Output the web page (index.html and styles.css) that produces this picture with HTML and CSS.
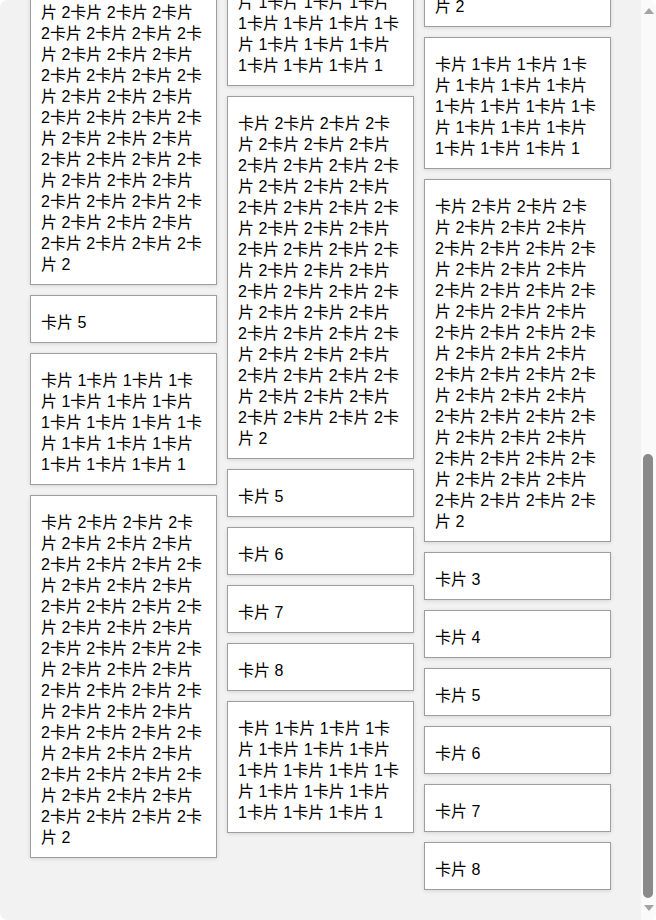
FILE: index.html
```html
<!DOCTYPE html>
<html lang="zh-CN">
<head>
    <meta charset="UTF-8">
    <title>瀑布流</title>
    <link rel="stylesheet" href="styles.css">
</head>
<body>

    <div class="app">
        <div id="waterfall">
            <div class="cols">
                <div class="col"></div>
                <div class="col"></div>
                <div class="col"></div>
            </div>
        </div>

        <div class="bar">
            <div class="arrow up"></div>
            <div class="track"><div class="thumb"></div></div>
            <div class="arrow down"></div>
        </div>
    </div>

    <script>
        var box = document.getElementById('waterfall');
        var col = box.getElementsByClassName('col');
        var track = document.getElementsByClassName('track')[0];
        var thumb = document.getElementsByClassName('thumb')[0];

        // 每一列放哪些卡片, 1 和 2 是长卡片
        var list = [
            [1, 2, 3, 4, 5, 6, 7, 2, 5, 1, 2],
            [2, 3, 4, 5, 6, 7, 8, 3, 4, 1, 2, 5, 6, 7, 8, 1],
            [2, 6, 7, 8, 2, 1, 2, 3, 4, 5, 6, 7, 8]
        ];

        function cardText(n){
            if(n == 1) return '卡片 1'.repeat(17);
            if(n == 2) return '卡片 2'.repeat(53);
            return '卡片 ' + n;
        }

        for(var i = 0; i < list.length; i++){
            for(var j = 0; j < list[i].length; j++){
                var div = document.createElement('div');
                div.className = 'card';
                div.innerHTML = cardText(list[i][j]);
                col[i].appendChild(div);
            }
        }

        // 滚动条滑块的长度和位置
        function setThumb(){
            var h = track.clientHeight * box.clientHeight / box.scrollHeight;
            var max = box.scrollHeight - box.clientHeight;
            thumb.style.height = h + 'px';
            thumb.style.marginTop = (max ? (track.clientHeight - h) * box.scrollTop / max : 0) + 'px';
        }

        box.onscroll = setThumb;

        // 滚到最底部
        box.scrollTop = box.scrollHeight;
        setThumb();
    </script>

</body>
</html>
```

FILE: styles.css
```css
html,body{ margin: 0; padding: 0; }
body{
    background: #fff;
    font-family: "Liberation Sans", "Noto Sans CJK SC", sans-serif;
    font-size: 16px;
    color: #000;
}

.app{
    display: flex;
    height: 100vh;
    background: #f2f2f2;
    border-radius: 8px;
    overflow: hidden;
}

#waterfall{
    flex: 1;
    overflow-y: auto;
    scrollbar-width: none;
}

#waterfall .cols{
    display: grid;
    grid-template-columns: repeat(3, 1fr);
    gap: 10px;
    align-items: start;
    padding: 30px;
}

#waterfall .col{
    display: flex;
    flex-direction: column;
    gap: 10px;
}

#waterfall .card{
    background: #fff;
    border: 1px solid #9e9e9e;
    padding: 16px 10px 9px;
    line-height: 21px;
    box-shadow: 0 1px 4px rgba(0,0,0,.12);
}

/* 右边的滚动条 */
.bar{
    width: 15px;
    display: flex;
    flex-direction: column;
    background: #fafafa;
}

.bar .arrow{
    display: flex;
    justify-content: center;
}

.bar .up{
    height: 14px;
    align-items: flex-end;
}

.bar .down{
    height: 22px;
    align-items: flex-start;
    padding-top: 7px;
    box-sizing: border-box;
}

.bar .arrow::before{
    content: '';
    border-left: 5px solid transparent;
    border-right: 5px solid transparent;
}

.bar .up::before{
    border-bottom: 6px solid #a3a3a3;
}

.bar .down::before{
    border-top: 6px solid #a3a3a3;
}

.bar .track{
    flex: 1;
}

.bar .thumb{
    margin: 0 3px 0 2px;
    background: #8a8a8a;
    border-radius: 5px;
}
```
